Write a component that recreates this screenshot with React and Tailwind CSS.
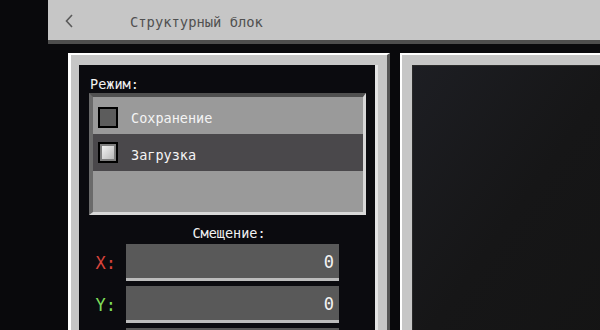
export default function App() {
  const font = "font-['DejaVu_Sans_Mono','Liberation_Mono',monospace]";
  return (
    <div className={`w-[600px] h-[330px] overflow-hidden bg-[#09090c] ${font} text-[13.5px] leading-[16px]`}>
      <div className="ml-[48px] h-[44px] bg-[#c6c6c6] border-b-4 border-[#4d4d4d] flex items-center">
        <svg className="ml-[17px] mt-[2px]" width="9" height="14" viewBox="0 0 9 14" fill="none">
          <path d="M7 1 L1.5 7 L7 13" stroke="#5a5a5a" strokeWidth="1.6" />
        </svg>
        <span className="ml-[56px] pt-[4px] text-[#505050] text-[13.8px]">Структурный блок</span>
      </div>
      <div className="flex gap-[10px] pl-[68px] pt-[9px]">
        <div className="w-[322px] h-[300px] shrink-0 bg-[#c6c6c6] border-t-2 border-l-[3px] border-t-white border-l-white border-r-[3px] border-r-[#555555] pt-[10px] pl-[8px] pr-[9px]">
          <div className="h-full bg-[#0b0b0f] border-r-[3px] border-[#e4e4e4] pl-[10px] pr-[9px] pt-[11px]">
            <div className="text-[#f2f2f2] pl-[1px] mb-[1px]">Режим:</div>
            <div className="border-t-4 border-l-4 border-t-[#505050] border-l-[#6a6a6a] border-r-[3px] border-b-[3px] border-r-[#d8d8d8] border-b-[#d8d8d8] bg-[#9a9a9a]">
              <div className="h-[37px] flex items-center pl-[5px] pt-[3px]">
                <div className="w-[20px] h-[21px] border-2 border-black bg-[#5c5c5c]" />
                <span className="ml-[13px] pt-[2px] text-[#f4f4f4]">Сохранение</span>
              </div>
              <div className="h-[37px] flex items-center pl-[5px] bg-[#4a484b]">
                <div className="w-[20px] h-[21px] border-2 border-black bg-[#7e7e7e] p-[2px]">
                  <div className="w-full h-full bg-gradient-to-br from-[#f2f2f2] to-[#b9b9b9]" />
                </div>
                <span className="ml-[13px] pt-[5px] text-[#f4f4f4]">Загрузка</span>
              </div>
              <div className="h-[41px]" />
            </div>
            <div className="mt-[10px] text-center text-[#f2f2f2] pl-[3px]">Смещение:</div>
            <div className="mt-[3px] flex items-center">
              <div className="w-[37px] pr-[10px] pt-[1px] text-right text-[#d8433b] text-[17px]">X:</div>
              <div className="w-[213px] h-[37px] bg-[#595959] border-b-[3px] border-[#bcbcbc] flex items-center justify-end pr-[5px] pt-[2px] text-[#f4f4f4] text-[17px]">0</div>
            </div>
            <div className="mt-[5px] flex items-center">
              <div className="w-[37px] pr-[10px] pt-[1px] text-right text-[#7fdc5a] text-[17px]">Y:</div>
              <div className="w-[213px] h-[37px] bg-[#595959] border-b-[3px] border-[#bcbcbc] flex items-center justify-end pr-[5px] pt-[2px] text-[#f4f4f4] text-[17px]">0</div>
            </div>
            <div className="mt-[5px] flex items-center">
              <div className="w-[37px]" />
              <div className="w-[213px] h-[37px] bg-[#595959] border-b-[3px] border-[#bcbcbc]" />
            </div>
          </div>
        </div>
        <div className="w-[220px] h-[300px] shrink-0 bg-[#c6c6c6] border-t-2 border-l-2 border-white pt-[10px] pl-[10px]">
          <div className="h-full bg-gradient-to-br from-[#1d1e23] via-[#161617] to-[#141414] border-t border-l border-[#2a2a2a]" />
        </div>
      </div>
    </div>
  );
}
